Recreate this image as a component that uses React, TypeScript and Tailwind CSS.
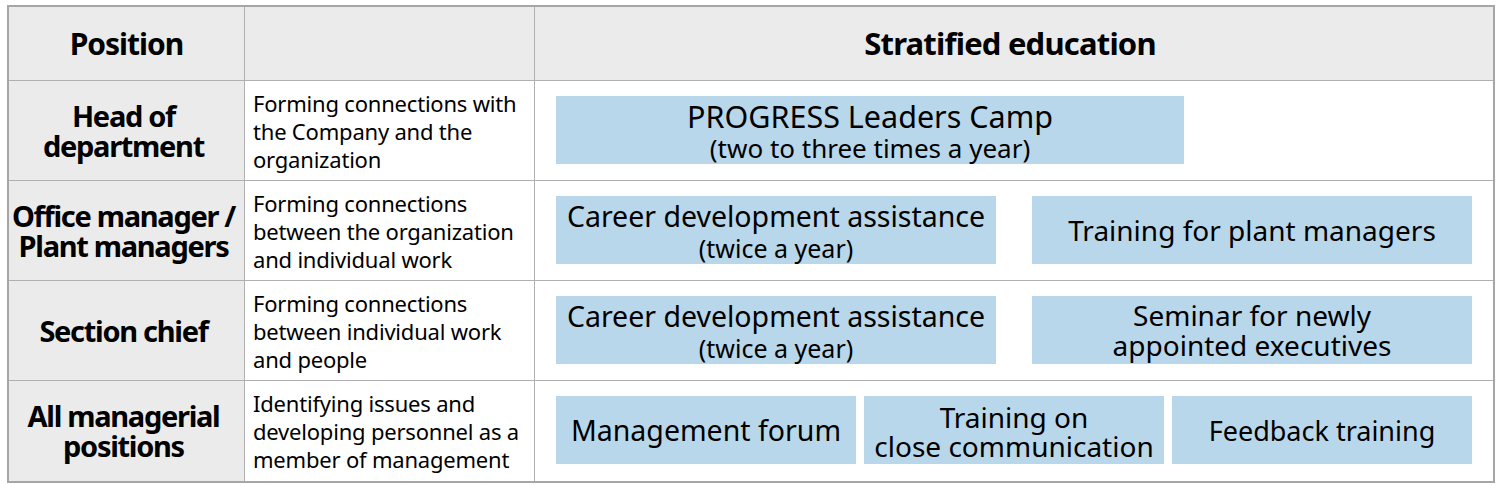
import React from "react";

const font = { fontFamily: '"Noto Sans", "Open Sans", "Noto Sans CJK KR", sans-serif' };

function Box({ w, extra = "", children }: { w: string; extra?: string; children: React.ReactNode }) {
  return (
    <div className={`${w} ${extra} h-[68px] bg-[#b9d7ea] flex flex-col items-center justify-center text-center text-black leading-[29px]`}>
      {children}
    </div>
  );
}

function Row({
  title,
  desc,
  last,
  children,
}: {
  title: React.ReactNode;
  desc: React.ReactNode;
  last?: boolean;
  children: React.ReactNode;
}) {
  return (
    <div className={`flex h-[100px] ${last ? "" : "border-b border-[#b0b0b0]"}`}>
      <div className="w-[236px] shrink-0 bg-[#ebebeb] border-r border-[#b0b0b0] flex items-center justify-center text-center text-[29px] font-bold leading-[30px] tracking-[-1.3px] text-black pr-[6px]">
        {title}
      </div>
      <div className="w-[290px] shrink-0 border-r border-[#b0b0b0] flex items-center pl-[8px] text-[22px] leading-[28px] tracking-[-0.2px] text-black">
        {desc}
      </div>
      <div className="flex-1 pl-[21px] pt-[15px]">{children}</div>
    </div>
  );
}

export default function App() {
  return (
    <div className="w-[1500px] h-[485px] bg-white" style={font}>
      <div className="ml-[7px] mt-[5px] w-[1488px] border-2 border-[#a6a6a6] bg-white">
        <div className="flex h-[74px] bg-[#ebebeb] border-b border-[#b0b0b0]">
          <div className="w-[236px] shrink-0 border-r border-[#b0b0b0] flex items-center justify-center text-[30px] font-bold tracking-[-1px] text-black">
            Position
          </div>
          <div className="w-[290px] shrink-0 border-r border-[#b0b0b0]" />
          <div className="flex-1 flex items-center justify-center text-[31px] font-bold tracking-[-0.8px] text-black pr-[8px]">
            Stratified education
          </div>
        </div>

        <Row
          title={<span>Head of<br />department</span>}
          desc={<span>Forming connections with<br />the Company and the<br />organization</span>}
        >
          <Box w="w-[628px]" extra="pt-[5px]">
            <div className="text-[30.5px] leading-[31px]">PROGRESS Leaders Camp</div>
            <div className="text-[26px] leading-[32px]">(two to three times a year)</div>
          </Box>
        </Row>

        <Row
          title={<span>Office manager /<br />Plant managers</span>}
          desc={<span>Forming connections<br />between the organization<br />and individual work</span>}
        >
          <div className="flex gap-[36px]">
            <Box w="w-[440px]" extra="pt-[4px]">
              <div className="text-[28.5px] leading-[31px]">Career development assistance</div>
              <div className="text-[25px] leading-[32px]">(twice a year)</div>
            </Box>
            <Box w="w-[440px]">
              <div className="text-[28px]">Training for plant managers</div>
            </Box>
          </div>
        </Row>

        <Row
          title={<span>Section chief</span>}
          desc={<span>Forming connections<br />between individual work<br />and people</span>}
        >
          <div className="flex gap-[36px]">
            <Box w="w-[440px]" extra="pt-[4px]">
              <div className="text-[28.5px] leading-[31px]">Career development assistance</div>
              <div className="text-[25px] leading-[32px]">(twice a year)</div>
            </Box>
            <Box w="w-[440px]">
              <div className="text-[28px] leading-[30px]">Seminar for newly</div>
              <div className="text-[28px] leading-[30px]">appointed executives</div>
            </Box>
          </div>
        </Row>

        <Row
          last
          title={<span>All managerial<br />positions</span>}
          desc={<span>Identifying issues and<br />developing personnel as a<br />member of management</span>}
        >
          <div className="flex gap-[8px]">
            <Box w="w-[300px]">
              <div className="text-[28.5px]">Management forum</div>
            </Box>
            <Box w="w-[300px]" extra="pt-[4px]">
              <div className="text-[28px] leading-[29px]">Training on</div>
              <div className="text-[28px] leading-[29px]">close communication</div>
            </Box>
            <Box w="w-[300px]">
              <div className="text-[27px]">Feedback training</div>
            </Box>
          </div>
        </Row>
      </div>
    </div>
  );
}
